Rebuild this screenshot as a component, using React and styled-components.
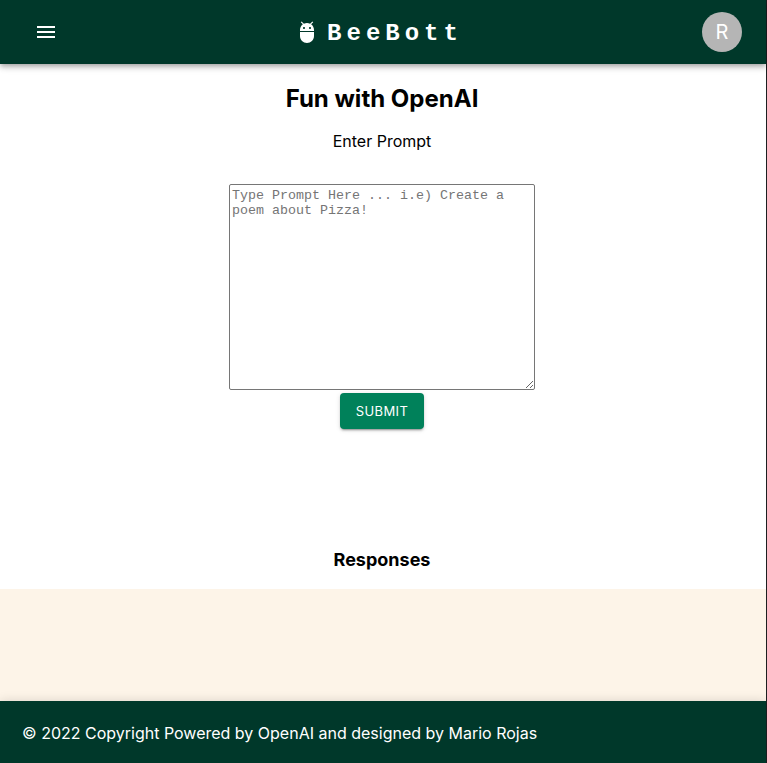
import React, { useState } from "react";
import styled, { createGlobalStyle } from "styled-components";

const GlobalStyle = createGlobalStyle`
  *, *::before, *::after { box-sizing: border-box; }
  body {
    margin: 0;
    background: #fff;
    color: #000;
    font-family: Inter, "Liberation Sans", sans-serif;
    font-size: 16px;
    line-height: 20px;
    font-variation-settings: "opsz" 32;
  }
`;

const Page = styled.div`
  display: flex;
  flex-direction: column;
  min-height: 100vh;
  border-right: 1px solid #1c1f20;
`;

const AppBar = styled.header`
  display: grid;
  grid-template-columns: 1fr auto 1fr;
  align-items: center;
  height: 64px;
  padding: 0 24px;
  background: #00382a;
  color: #fff;
  box-shadow: 0 2px 4px -1px rgba(0, 0, 0, 0.2), 0 4px 5px rgba(0, 0, 0, 0.14),
    0 1px 10px rgba(0, 0, 0, 0.12);
`;

const IconButton = styled.button`
  display: flex;
  justify-self: start;
  padding: 10px;
  border: 0;
  border-radius: 50%;
  background: transparent;
  color: inherit;
  cursor: pointer;
`;

const Icon = styled.svg`
  width: 24px;
  height: 24px;
  fill: currentColor;
`;

const Brand = styled.a`
  display: flex;
  align-items: center;
  gap: 8px;
  margin-right: 8px;
  color: inherit;
  text-decoration: none;
`;

const BrandName = styled.span`
  padding-top: 4px;
  font: 700 24px/28px "Courier New", "Liberation Mono", monospace;
  letter-spacing: 5px;
`;

const Avatar = styled.button`
  justify-self: end;
  width: 40px;
  height: 40px;
  padding: 0;
  border: 0;
  border-radius: 50%;
  background: #b5b5b5;
  color: #fff;
  font: 400 20px/20px Inter, sans-serif;
  cursor: pointer;
`;

const Main = styled.main`
  display: flex;
  flex-direction: column;
  align-items: center;
  padding: 20px 2px 0 0;
`;

const Title = styled.h1`
  margin: 0;
  font-size: 24px;
  line-height: 30px;
  font-weight: 700;
`;

const PromptForm = styled.form`
  display: flex;
  flex-direction: column;
  align-items: center;
  margin-top: 17px;
`;

const PromptInput = styled.textarea`
  width: 306px;
  height: 206px;
  margin: 33px 0 3px;
  padding: 3px 2px 2px;
  border: 1px solid #767676;
  border-radius: 2px;
  background: #fff;
  font-family: "Courier New", "Liberation Mono", monospace;
  line-height: 15px;

  &::placeholder { color: #757575; }
`;

const SubmitButton = styled.button`
  height: 36px;
  padding: 0 16px;
  border: 0;
  border-radius: 4px;
  background: #00815a;
  color: #fff;
  font: 400 13px/24px Inter, sans-serif;
  letter-spacing: 0.02857em;
  text-transform: uppercase;
  cursor: pointer;
  box-shadow: 0 3px 1px -2px rgba(0, 0, 0, 0.2), 0 2px 2px rgba(0, 0, 0, 0.14),
    0 1px 5px rgba(0, 0, 0, 0.12);
`;

const ResponsesTitle = styled.h2`
  margin: 120px 0 18px;
  font-size: 18px;
  line-height: 22px;
  font-weight: 700;
`;

const ResponseArea = styled.section`
  flex: 1;
  min-height: 96px;
  background: #fdf4e8;
`;

const Footer = styled.footer`
  padding: 22px 22px 20px;
  background: #00382a;
  color: #fff;
  box-shadow: 0 0 10px rgba(0, 0, 0, 0.14);
`;

export default function App() {
  const [prompt, setPrompt] = useState("");

  return (
    <>
      <GlobalStyle />
      <Page>
        <AppBar>
          <IconButton type="button" aria-label="Open menu">
            <Icon viewBox="0 0 24 24" aria-hidden="true">
              <path d="M3 18h18v-2H3v2zm0-5h18v-2H3v2zm0-7v2h18V6H3z" />
            </Icon>
          </IconButton>
          <Brand href="#">
            <Icon viewBox="0 0 24 24" aria-hidden="true">
              <path d="M5 16c0 3.87 3.13 7 7 7s7-3.13 7-7v-4H5v4zM16.12 4.37l2.1-2.1-.82-.83-2.3 2.31C14.16 3.28 13.12 3 12 3s-2.14.28-3.09.75L6.6 1.44l-.82.83 2.1 2.1C6.14 5.64 5 7.68 5 10v1h14v-1c0-2.32-1.14-4.36-2.88-5.63zM9 9c-.55 0-1-.45-1-1s.45-1 1-1 1 .45 1 1-.45 1-1 1zm6 0c-.55 0-1-.45-1-1s.45-1 1-1 1 .45 1 1-.45 1-1 1z" />
            </Icon>
            <BrandName>BeeBott</BrandName>
          </Brand>
          <Avatar type="button" aria-label="R account">R</Avatar>
        </AppBar>
        <Main>
          <Title>Fun with OpenAI</Title>
          <PromptForm onSubmit={(event) => event.preventDefault()}>
            <label htmlFor="prompt">Enter Prompt</label>
            <PromptInput
              id="prompt"
              placeholder="Type Prompt Here ... i.e) Create a poem about Pizza!"
              value={prompt}
              onChange={(event) => setPrompt(event.target.value)}
            />
            <SubmitButton type="submit">Submit</SubmitButton>
          </PromptForm>
          <ResponsesTitle>Responses</ResponsesTitle>
        </Main>
        <ResponseArea aria-label="Responses" />
        <Footer>© 2022 Copyright Powered by OpenAI and designed by Mario Rojas</Footer>
      </Page>
    </>
  );
}
